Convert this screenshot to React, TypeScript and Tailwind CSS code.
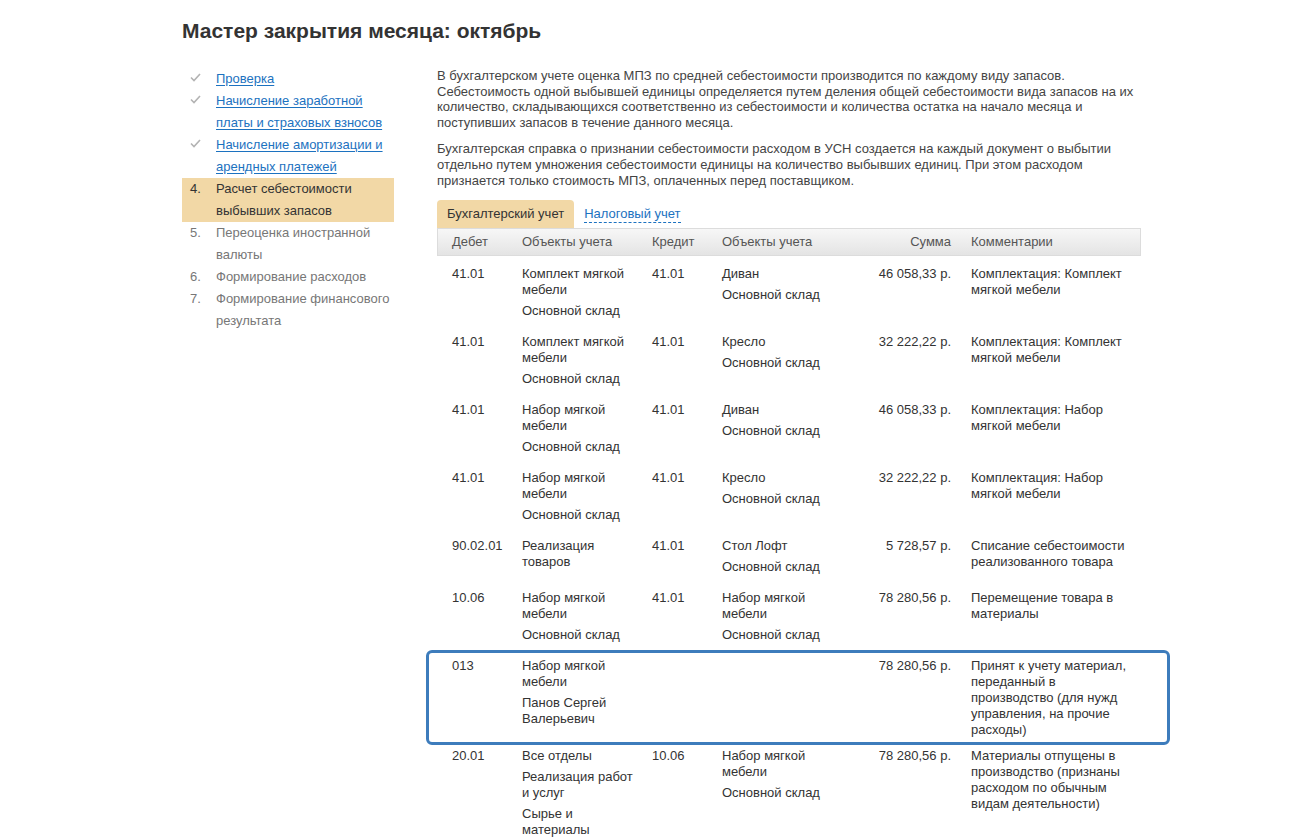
import React from 'react';

type Row = {
  debit: string;
  debitObjects: string[];
  credit: string;
  creditObjects: string[];
  sum: string;
  comment: string;
  selected?: boolean;
};

const steps = [
  { mark: 'check', text: 'Проверка', state: 'done' },
  { mark: 'check', text: 'Начисление заработной платы и страховых взносов', state: 'done' },
  { mark: 'check', text: 'Начисление амортизации и арендных платежей', state: 'done' },
  { mark: '4.', text: 'Расчет себестоимости выбывших запасов', state: 'current' },
  { mark: '5.', text: 'Переоценка иностранной валюты', state: 'todo' },
  { mark: '6.', text: 'Формирование расходов', state: 'todo' },
  { mark: '7.', text: 'Формирование финансового результата', state: 'todo' },
];

const rows: Row[] = [
  {
    debit: '41.01',
    debitObjects: ['Комплект мягкой мебели', 'Основной склад'],
    credit: '41.01',
    creditObjects: ['Диван', 'Основной склад'],
    sum: '46 058,33 р.',
    comment: 'Комплектация: Комплект мягкой мебели',
  },
  {
    debit: '41.01',
    debitObjects: ['Комплект мягкой мебели', 'Основной склад'],
    credit: '41.01',
    creditObjects: ['Кресло', 'Основной склад'],
    sum: '32 222,22 р.',
    comment: 'Комплектация: Комплект мягкой мебели',
  },
  {
    debit: '41.01',
    debitObjects: ['Набор мягкой мебели', 'Основной склад'],
    credit: '41.01',
    creditObjects: ['Диван', 'Основной склад'],
    sum: '46 058,33 р.',
    comment: 'Комплектация: Набор мягкой мебели',
  },
  {
    debit: '41.01',
    debitObjects: ['Набор мягкой мебели', 'Основной склад'],
    credit: '41.01',
    creditObjects: ['Кресло', 'Основной склад'],
    sum: '32 222,22 р.',
    comment: 'Комплектация: Набор мягкой мебели',
  },
  {
    debit: '90.02.01',
    debitObjects: ['Реализация товаров'],
    credit: '41.01',
    creditObjects: ['Стол Лофт', 'Основной склад'],
    sum: '5 728,57 р.',
    comment: 'Списание себестоимости реализованного товара',
  },
  {
    debit: '10.06',
    debitObjects: ['Набор мягкой мебели', 'Основной склад'],
    credit: '41.01',
    creditObjects: ['Набор мягкой мебели', 'Основной склад'],
    sum: '78 280,56 р.',
    comment: 'Перемещение товара в материалы',
  },
  {
    debit: '013',
    debitObjects: ['Набор мягкой мебели', 'Панов Сергей Валерьевич'],
    credit: '',
    creditObjects: [],
    sum: '78 280,56 р.',
    comment: 'Принят к учету материал, переданный в производство (для нужд управления, на прочие расходы)',
    selected: true,
  },
  {
    debit: '20.01',
    debitObjects: ['Все отделы', 'Реализация работ и услуг', 'Сырье и материалы'],
    credit: '10.06',
    creditObjects: ['Набор мягкой мебели', 'Основной склад'],
    sum: '78 280,56 р.',
    comment: 'Материалы отпущены в производство (признаны расходом по обычным видам деятельности)',
  },
];

function Check() {
  return (
    <svg width="11" height="9" viewBox="0 0 11 9" className="mt-[5px]">
      <path d="M1 4.5 L4 7.5 L10 1" fill="none" stroke="#b3b3b3" strokeWidth="1.6" />
    </svg>
  );
}

function Objects({ items }: { items: string[] }) {
  return (
    <>
      {items.map((item, i) => (
        <div key={i} className="mb-[5px]">
          {item}
        </div>
      ))}
    </>
  );
}

export default function App() {
  return (
    <div
      className="min-h-screen bg-white pl-[182px] pt-[18px] text-[13px] text-[#333]"
      style={{ fontFamily: '"Liberation Sans", Arial, sans-serif' }}
    >
      <h1 className="text-[21px] font-bold leading-[26px] text-[#333]">Мастер закрытия месяца: октябрь</h1>

      <div className="mt-[24px] flex">
        {/* steps */}
        <ul className="w-[212px] shrink-0 leading-[22px]">
          {steps.map((s, i) => (
            <li
              key={i}
              className={
                'flex pl-[8px] ' +
                (s.state === 'current' ? 'bg-[#f2d8a6] text-[#333]' : s.state === 'todo' ? 'text-[#777]' : '')
              }
            >
              <div className="w-[26px] shrink-0">
                {s.mark === 'check' ? <Check /> : <span>{s.mark}</span>}
              </div>
              <div className="w-[178px]">
                {s.state === 'done' ? (
                  <a href="#" className="text-[#1c72c0] underline underline-offset-[2px]">
                    {s.text}
                  </a>
                ) : (
                  s.text
                )}
              </div>
            </li>
          ))}
        </ul>

        {/* content */}
        <div className="ml-[43px] w-[704px] shrink-0">
          <p className="leading-[1.2] text-[#444]">
            В бухгалтерском учете оценка МПЗ по средней себестоимости производится по каждому виду запасов.
            Себестоимость одной выбывшей единицы определяется путем деления общей себестоимости вида запасов на их
            количество, складывающихся соответственно из себестоимости и количества остатка на начало месяца и
            поступивших запасов в течение данного месяца.
          </p>
          <p className="mt-[11px] leading-[1.2] text-[#444]">
            Бухгалтерская справка о признании себестоимости расходом в УСН создается на каждый документ о выбытии
            отдельно путем умножения себестоимости единицы на количество выбывших единиц. При этом расходом
            признается только стоимость МПЗ, оплаченных перед поставщиком.
          </p>

          <div className="mt-[12px] flex items-end">
            <div className="h-[28px] rounded-t-[4px] bg-[#f2d8a6] px-[10px] leading-[28px] text-[#333]">
              Бухгалтерский учет
            </div>
            <a
              href="#"
              className="mb-[5px] ml-[10px] border-b border-dashed border-[#1c72c0] leading-[16px] text-[#1c72c0]"
            >
              Налоговый учет
            </a>
          </div>

          <div className="grid grid-cols-[70px_130px_70px_140px_109px_185px]">
            {/* header */}
            <div className="col-span-6 grid h-[28px] grid-cols-subgrid items-center border border-[#dcdcdc] bg-gradient-to-b from-[#f7f7f7] to-[#e4e4e4] text-[#555]">
              <div className="pl-[14px]">Дебет</div>
              <div className="pl-[15px]">Объекты учета</div>
              <div className="pl-[15px]">Кредит</div>
              <div className="pl-[15px]">Объекты учета</div>
              <div className="pr-[5px] text-right">Сумма</div>
              <div className="pl-[15px]">Комментарии</div>
            </div>

            {rows.map((r, i) => (
              <div key={i} className="relative col-span-6 grid grid-cols-subgrid pt-[10px] leading-[16px] text-[#333]">
                {r.selected && (
                  <div className="pointer-events-none absolute -bottom-[7px] -left-[11px] -right-[29px] top-[2px] rounded-[6px] border-[3px] border-[#3d7cbc]" />
                )}
                <div className="pl-[15px]">{r.debit}</div>
                <div className="pl-[15px]">
                  <Objects items={r.debitObjects} />
                </div>
                <div className="pl-[15px]">{r.credit}</div>
                <div className="pl-[15px] pr-[10px]">
                  <Objects items={r.creditObjects} />
                </div>
                <div className="pr-[5px] text-right">{r.sum}</div>
                <div className="pl-[15px]">{r.comment}</div>
              </div>
            ))}
          </div>
        </div>
      </div>
    </div>
  );
}
